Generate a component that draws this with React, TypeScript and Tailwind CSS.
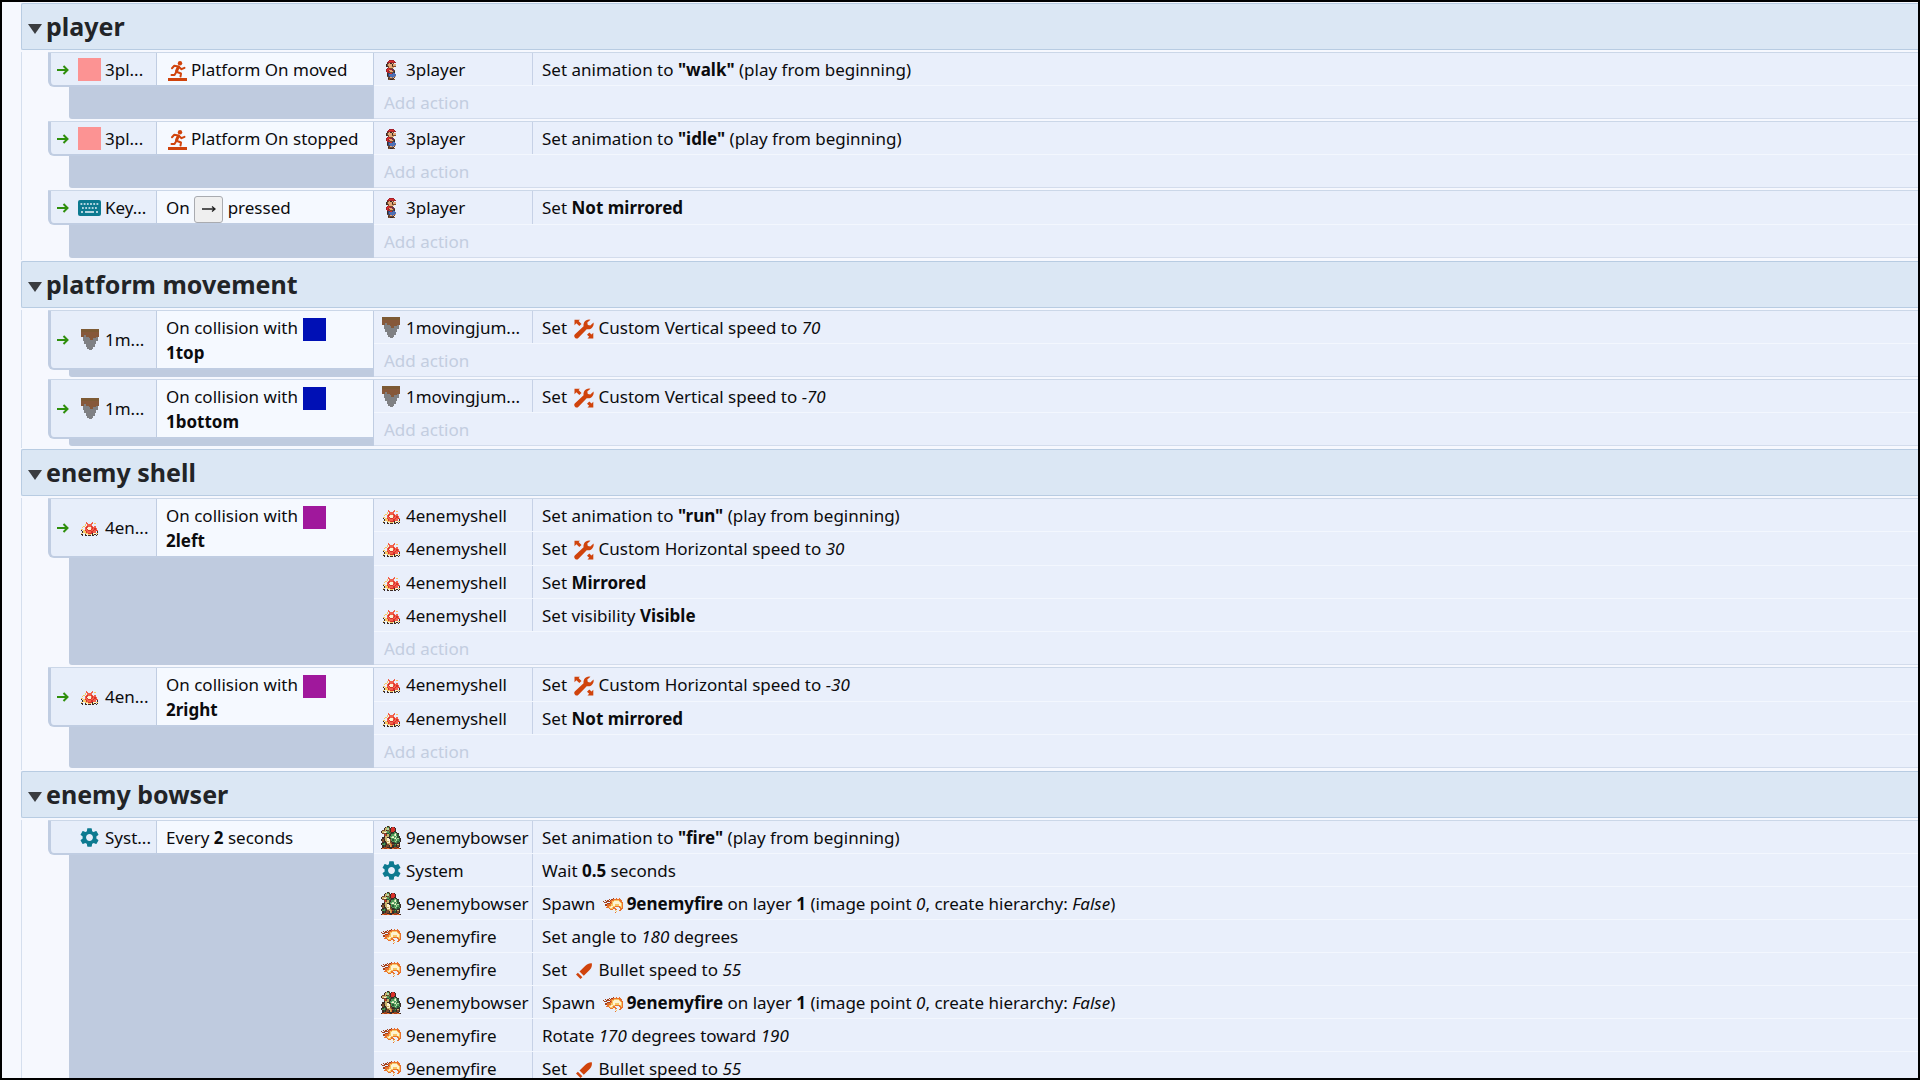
import { useState, type ReactNode } from "react";
import { MdSettings } from "react-icons/md";

/* ---------- pixel sprites ---------- */

const palette: Record<string, string> = {
  r: "#a3202c",
  R: "#d8302a",
  k: "#3a2a26",
  b: "#4f6fb4",
  B: "#33466f",
  s: "#e2a878",
  n: "#7a4a2c",
  o: "#e9722c",
  y: "#f7c765",
  c: "#fdf3d2",
  g: "#4f9a5a",
  G: "#2c5a38",
  l: "#b4d8a4",
  t: "#7d5a34",
  u: "#86583a",
  a: "#7f8083",
  p: "#f2604a",
  m: "#a3401c",
  e: "#c9b26a",
};

const sprites: Record<string, { rows: string[]; w: number; h: number; shift: string }> = {
  mario: {
    w: 11,
    h: 20,
    shift: "",
    rows: [
      "...rrrr...",
      "..rRRRRr..",
      ".rrrrrrrr.",
      ".knsksn...",
      "knsssksss.",
      "kknssnnnn.",
      "..nssss...",
      ".rRrnn....",
      "rRRRrBr...",
      "rRrssrBn..",
      "rRrnssnk..",
      ".rrRnnBk..",
      ".kBBRBbb..",
      ".kBbbbbbb.",
      ".nBBbbbbs.",
      "..nnsbsn..",
      "..knnnk...",
      "..nnkknn..",
    ],
  },
  jumper: {
    w: 18,
    h: 21,
    shift: "",
    rows: [
      "tttttttttttt",
      "tttttttttttt",
      "uuuuuuuuuuuu",
      "uuuuuuuuuuuu",
      "uuauuuuuuuuu",
      ".aaaauuuuua.",
      ".aaaaauuaaa.",
      ".aaaaaaaaaa.",
      "..aaaaaaaa..",
      "..aaaaaaaa..",
      "...aaaaaa...",
      "...aaaaaa...",
      "....aaaa....",
      ".....aa.....",
    ],
  },
  shell: {
    w: 17,
    h: 14,
    shift: "mt-0.5",
    rows: [
      "....p....p....",
      "....pp..pp.y..",
      "...y.pppp.....",
      "..y.pRppRp.p..",
      ".y.pRpccpRpp..",
      "...pRcccpRpRp.",
      "yy.ppRccRppRp.",
      "k.yRppRRppRpRp",
      ".kyyRpppRRpp.k",
      "yc.yyyRRRkccyy",
      "kk.kccyyckyk.k",
      ".k.kk.kk.kk.k.",
    ],
  },
  bowser: {
    w: 20,
    h: 23,
    shift: "",
    rows: [
      ".....ke.........",
      "...kegk.kRk.....",
      "..keelnkRRRk....",
      ".nnekngkRRRk....",
      "keeelgnkRRkk....",
      "keccegGnkkgGk...",
      ".nnnkGgGkGglgk..",
      "..nRneGkgglcgG..",
      "..keeekgglgglGk.",
      ".kkeekkglcglgGk.",
      ".kneeckkgglcglGk",
      "knkeeccngGgglgGk",
      ".nkkeecnkgglgGgk",
      ".kGknccnnkGggGk.",
      "kGgGkeeonkkkGkk.",
      "kggGkneeonGgkek.",
      ".kGknnkeokGGknk.",
      ".kmmmkkkkkmmmk..",
      "kommmomkkommmomk",
    ],
  },
  fire: {
    w: 20,
    h: 15,
    shift: "",
    rows: [
      ".........m..o.o...",
      ".....m.mmooooooo..",
      "..m.m.moooyyyyooo.",
      "m..mmmooyyccccyoo.",
      ".mmm..moyccccccyoo",
      "....mmooycccccccyo",
      "..mmoooyyccyyyccyo",
      "....oyyccyyooooyyo",
      "...ooyccyoo...ooyo",
      ".....oyyyooo...ooo",
      "......ooo..oo..oo.",
      ".........c.y..oo..",
      "............y.....",
      "...........o......",
    ],
  },
};

function Sprite({ name }: { name: string }) {
  const s = sprites[name];
  return (
    <svg
      className={`inline-block shrink-0 align-middle ${s.shift}`}
      width={s.w}
      height={s.h}
      viewBox={`0 0 ${s.rows[0].length} ${s.rows.length}`}
      preserveAspectRatio="none"
      shapeRendering="crispEdges"
      aria-hidden="true"
    >
      {s.rows.map((row, y) =>
        row.split("").map((c, x) =>
          c === "." ? null : <rect key={`${x}-${y}`} x={x} y={y} width={1} height={1} fill={palette[c]} />,
        ),
      )}
    </svg>
  );
}

/* ---------- vector icons ---------- */

function PlatformIcon() {
  return (
    <svg
      className="mr-1 ml-0.5 inline-block h-5 w-[19px] align-middle"
      viewBox="0 0 19 20"
      fill="none"
      stroke="#d0430c"
      strokeWidth="2"
      strokeLinecap="round"
      strokeLinejoin="round"
      aria-hidden="true"
    >
      <circle cx="12" cy="2.200" r="2.200" fill="#d0430c" stroke="none" />
      <path d="M4 7.200l2.300-2.400 4.200.7" />
      <path d="M11 6l2.500 2.200 3-1.400" />
      <path d="M10.300 6.200L8.500 10.200" strokeWidth="3" />
      <path d="M9 11l4 1.500L12.500 15.500" />
      <path d="M8 11.500L6.500 14 3.500 14" />
      <path d="M0 18.500h19" strokeWidth="3" strokeLinecap="butt" />
    </svg>
  );
}

function CustomIcon() {
  return (
    <svg className="mr-1 ml-[3px] inline-block size-5 align-middle" viewBox="0 0 20 20" fill="#d0430c" aria-hidden="true">
      <path d="M.5.8h5.400L4.600 2.100l2.900 2.800-2.200 2.200-2.900-2.900L.5 6.200z" />
      <path d="M19.300 19.500h-5.800l1.700-1.700-2.200-2.100 2.300-2.300 2.200 2.200 1.800-1.900z" />
      <path d="M16.500.7a5.600 5.600 0 0 0-6.900 6.600L1 15.300a2.500 2.500 0 0 0 0 3.400 2.500 2.500 0 0 0 3.500 0l8.200-8.500a5.600 5.600 0 0 0 6.800-6.800L16.300 6.400l-2.500-.5-.5-2.300z" />
    </svg>
  );
}

function BulletIcon() {
  return (
    <svg className="mr-1 ml-[3px] inline-block size-5 align-middle" viewBox="0 0 20 20" fill="#d0430c" aria-hidden="true">
      <path d="M17.800 2.200c.5 2.600-.2 4.700-2.200 6.700l-5.800 5.800-4.300-4.200 5.900-5.700C13.200 3 15.300 1.900 17.800 2.200z" />
      <path d="M3.900 11.800l4.500 4.400-1.900 1.800L2 13.500z" />
    </svg>
  );
}

function KeyboardIcon() {
  return (
    <svg className="h-4 w-[23px] shrink-0" viewBox="0 0 23 16" aria-hidden="true">
      <rect width="23" height="16" rx="2" fill="#0d7a90" />
      <g stroke="#eaf4fa" strokeWidth="1.600">
        <path d="M2.500 4h18" strokeDasharray="1.800 1.400" />
        <path d="M4 8h15" strokeDasharray="1.800 1.450" />
        <path d="M3 12h2M7 12h9M18 12h2" />
      </g>
    </svg>
  );
}

function Swatch({ tone }: { tone: "pink" | "blue" | "purple" }) {
  const color = { pink: "bg-[#fc9393]", blue: "bg-[#0010b5]", purple: "bg-[#a0189c]" }[tone];
  return <span className={`inline-block size-[23px] shrink-0 align-middle ${color}`} />;
}

function ObjectIcon({ name }: { name: string }) {
  if (name === "pink") return <Swatch tone="pink" />;
  if (name === "keyboard") return <KeyboardIcon />;
  if (name === "system") return <MdSettings className="size-[23px] shrink-0 text-[#0d7a90]" />;
  return <Sprite name={name} />;
}

/* ---------- event sheet data ---------- */

type Action = { icon: string; object: string; body: ReactNode; tall?: boolean };
type Event = {
  icon: string;
  object: string;
  trigger: boolean;
  condition: ReactNode;
  actions: Action[];
};

const playAnimation = (name: string) => (
  <>
    Set animation to <b>"{name}"</b> (play from beginning)
  </>
);
const customSpeed = (axis: string, value: string) => (
  <>
    Set <CustomIcon />
    Custom {axis} speed to <i>{value}</i>
  </>
);
const collision = (tone: "blue" | "purple", name: string) => (
  <>
    On collision with{" "}
    <span className="ml-px">
      <Swatch tone={tone} />
    </span>
    <b className="block">{name}</b>
  </>
);
const setBold = (value: string) => (
  <>
    Set <b>{value}</b>
  </>
);
const spawnFire = (
  <>
    Spawn{" "}
    <span className="mr-1 ml-[3px]">
      <Sprite name="fire" />
    </span>
    <b>9enemyfire</b> on layer <b>1</b> (image point <i>0</i>, create hierarchy: <i>False</i>)
  </>
);
const bulletSpeed = (
  <>
    Set <BulletIcon />
    Bullet speed to <i>55</i>
  </>
);

const player = (body: ReactNode, tall = false): Action => ({ icon: "mario", object: "3player", body, tall });
const jumper = (body: ReactNode): Action => ({ icon: "jumper", object: "1movingjum...", body });
const shell = (body: ReactNode, tall = false): Action => ({ icon: "shell", object: "4enemyshell", body, tall });
const bowser = (body: ReactNode): Action => ({ icon: "bowser", object: "9enemybowser", body });
const fire = (body: ReactNode): Action => ({ icon: "fire", object: "9enemyfire", body });

const groups: { title: string; events: Event[] }[] = [
  {
    title: "player",
    events: [
      {
        icon: "pink",
        object: "3pl...",
        trigger: true,
        condition: (
          <>
            <PlatformIcon />
            Platform On moved
          </>
        ),
        actions: [player(playAnimation("walk"))],
      },
      {
        icon: "pink",
        object: "3pl...",
        trigger: true,
        condition: (
          <>
            <PlatformIcon />
            Platform On stopped
          </>
        ),
        actions: [player(playAnimation("idle"))],
      },
      {
        icon: "keyboard",
        object: "Key...",
        trigger: true,
        condition: (
          <>
            On{" "}
            <kbd className="-my-1 inline-flex h-[27px] w-[29px] items-center justify-center rounded-[3px] border border-[#a9abb0] bg-[#efefef] align-middle font-[inherit]">
              <svg className="h-2 w-3.5" viewBox="0 0 14 8" stroke="#222" strokeWidth="1.300" fill="none" aria-label="right arrow">
                <path d="M0 4h13M10 1.500L13 4l-3 2.500" />
              </svg>
            </kbd>{" "}
            pressed
          </>
        ),
        actions: [player(setBold("Not mirrored"), true)],
      },
    ],
  },
  {
    title: "platform movement",
    events: [
      {
        icon: "jumper",
        object: "1m...",
        trigger: true,
        condition: collision("blue", "1top"),
        actions: [jumper(customSpeed("Vertical", "70"))],
      },
      {
        icon: "jumper",
        object: "1m...",
        trigger: true,
        condition: collision("blue", "1bottom"),
        actions: [jumper(customSpeed("Vertical", "-70"))],
      },
    ],
  },
  {
    title: "enemy shell",
    events: [
      {
        icon: "shell",
        object: "4en...",
        trigger: true,
        condition: collision("purple", "2left"),
        actions: [
          shell(playAnimation("run")),
          shell(customSpeed("Horizontal", "30"), true),
          shell(setBold("Mirrored")),
          shell(
            <>
              Set visibility <b>Visible</b>
            </>,
          ),
        ],
      },
      {
        icon: "shell",
        object: "4en...",
        trigger: true,
        condition: collision("purple", "2right"),
        actions: [shell(customSpeed("Horizontal", "-30"), true), shell(setBold("Not mirrored"))],
      },
    ],
  },
  {
    title: "enemy bowser",
    events: [
      {
        icon: "system",
        object: "Syst...",
        trigger: false,
        condition: (
          <>
            Every <b>2</b> seconds
          </>
        ),
        actions: [
          bowser(playAnimation("fire")),
          {
            icon: "system",
            object: "System",
            body: (
              <>
                Wait <b>0.5</b> seconds
              </>
            ),
          },
          bowser(spawnFire),
          fire(
            <>
              Set angle to <i>180</i> degrees
            </>,
          ),
          fire(bulletSpeed),
          bowser(spawnFire),
          fire(
            <>
              Rotate <i>170</i> degrees toward <i>190</i>
            </>,
          ),
          fire(bulletSpeed),
        ],
      },
    ],
  },
];

/* ---------- layout ---------- */

function ConditionRow({ event }: { event: Event }) {
  return (
    <div className="flex rounded-bl-md border-b-2 border-l-[3px] border-[#c0cde2] bg-[#e7eefa]">
      <div className="flex w-[106px] shrink-0 items-center border-r border-[#c0cde2] pt-px">
        <span className="flex w-[22px] shrink-0 justify-end">
          {event.trigger && (
            <svg className="mr-1 h-3 w-3" viewBox="0 0 12 12" fill="none" stroke="#2f8f0c" strokeWidth="2" aria-label="trigger">
              <path d="M0 6h10.500M6.500 2l4 4-4 4" />
            </svg>
          )}
        </span>
        <span className="ml-1 flex w-[25px] shrink-0 items-center justify-center">
          <ObjectIcon name={event.icon} />
        </span>
        <span className="ml-[3px] whitespace-nowrap">{event.object}</span>
      </div>
      <div className="min-w-0 flex-1 bg-[#f5f9ff] pt-[5px] pb-[3px] pl-[9px]">{event.condition}</div>
    </div>
  );
}

function ActionRow({ action }: { action: Action }) {
  return (
    <div className={`flex border-b border-[#f3f7fe] ${action.tall ? "h-[34px]" : "h-[33px]"}`}>
      <div className="flex w-[159px] shrink-0 items-center border-r border-[#c6d1e6] pt-px pl-[5px]">
        <span className="flex w-6 shrink-0 items-center justify-center">
          <ObjectIcon name={action.icon} />
        </span>
        <span className="ml-[3px] whitespace-nowrap">{action.object}</span>
      </div>
      <div className="min-w-0 flex-1 pt-[5px] pl-[9px] whitespace-nowrap">{action.body}</div>
    </div>
  );
}

function EventBlock({ event }: { event: Event }) {
  return (
    <article className="flex border-l border-[#d5dfee] pb-0.5 pl-[26px]">
      <div className="flex min-w-0 flex-1 border-t border-[#cbd7e8]">
        <div className="flex w-[326px] shrink-0 flex-col border-r border-[#c0cde2]">
          <ConditionRow event={event} />
          <div className="ml-[21px] flex-1 rounded-bl-[3px] bg-[#bfcbdf]" />
        </div>
        <div className="min-w-0 flex-1 border-b border-[#d3dcec] bg-[#e9effb]">
          {event.actions.map((action, i) => (
            <ActionRow key={i} action={action} />
          ))}
          <button type="button" className="flex h-8 w-full items-center pt-0.5 pl-[10px] text-left text-[#c3cde0]">
            Add action
          </button>
        </div>
      </div>
    </article>
  );
}

export default function App() {
  const [closed, setClosed] = useState<Record<string, boolean>>({});
  return (
    <main className="h-screen overflow-hidden border-2 border-black bg-[#f6f8fe] pt-px pl-[19px] font-['Noto_Sans','Open_Sans',sans-serif] text-[17px] leading-6 text-[#0b0b0d]">
      {groups.map((group) => (
        <section key={group.title} className="pb-px">
          <h2>
            <button
              type="button"
              aria-expanded={!closed[group.title]}
              onClick={() => setClosed((c) => ({ ...c, [group.title]: !c[group.title] }))}
              className="mb-0.5 flex h-[47px] w-full items-center rounded-l-xs border border-r-0 border-[#b8cce2] bg-[#dbe7f4] pb-0.5 pl-1.5 text-left text-[25px] leading-8 font-bold text-[#222427]"
            >
              <svg className="mt-1.5 mr-1 h-2.5 w-3.5" viewBox="0 0 14 10" fill="#3b3d40" aria-hidden="true">
                <path d="M0 0h14L7 10z" />
              </svg>
              {group.title}
            </button>
          </h2>
          {!closed[group.title] && group.events.map((event, i) => <EventBlock key={i} event={event} />)}
        </section>
      ))}
    </main>
  );
}
